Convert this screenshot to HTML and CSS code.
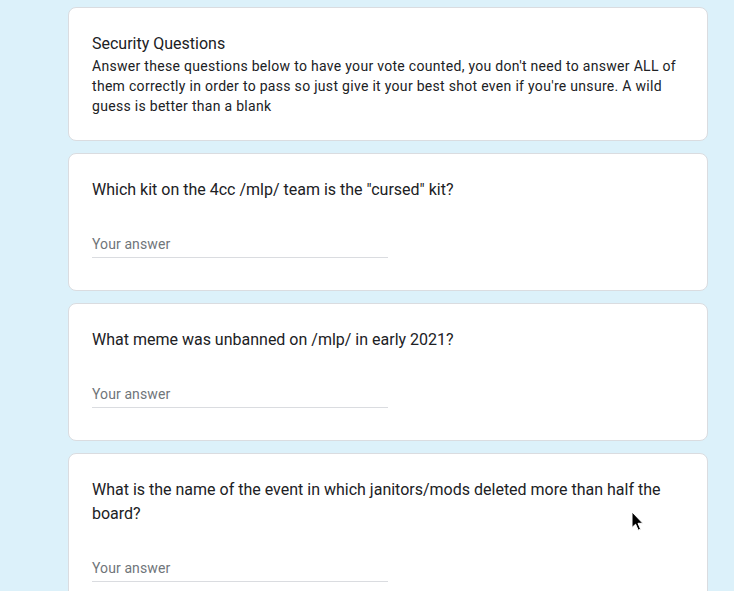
FILE: index.html
```html
<!DOCTYPE html>
<html>
<head>
<meta charset="utf-8">
<link rel="stylesheet" href="styles.css">
</head>
<body>
<div class="form">
  <div class="card">
    <div class="section-title">Security Questions</div>
    <div class="section-desc">Answer these questions below to have your vote counted, you don't need to answer ALL of them correctly in order to pass so just give it your best shot even if you're unsure. A wild guess is better than a blank</div>
  </div>
  <div class="card">
    <div class="q-title">Which kit on the 4cc /mlp/ team is the "cursed" kit?</div>
    <div class="answer"><span class="placeholder">Your answer</span></div>
  </div>
  <div class="card">
    <div class="q-title">What meme was unbanned on /mlp/ in early 2021?</div>
    <div class="answer"><span class="placeholder">Your answer</span></div>
  </div>
  <div class="card">
    <div class="q-title">What is the name of the event in which janitors/mods deleted more than half the board?</div>
    <div class="answer"><span class="placeholder">Your answer</span></div>
  </div>
</div>
<svg class="cursor" width="14" height="22" viewBox="0 0 14 22">
  <path d="M1 1 L1 16.5 L4.6 13.2 L7.2 19.2 L9.6 18.2 L7 12.3 L11.8 12.3 Z" fill="#000" stroke="#fff" stroke-width="1" stroke-linejoin="round"/>
</svg>
</body>
</html>
```
FILE: styles.css
```css
html, body {
  margin: 0;
  padding: 0;
  background: #dcf1fa;
  font-family: Roboto, "Liberation Sans", Arial, sans-serif;
  color: #202124;
  overflow: hidden;
  height: 591px;
}
.form {
  display: flex;
  flex-direction: column;
  gap: 12px;
  width: 640px;
  margin-left: 68px;
  padding-top: 7px;
}
.card {
  background: #fff;
  border: 1px solid #dadce0;
  border-radius: 8px;
  padding: 24px 24px 24px 23px;
}
.section-title {
  font-size: 16px;
  line-height: 24px;
  letter-spacing: 0;
}
.section-desc {
  font-size: 14px;
  line-height: 20px;
  letter-spacing: 0.3px;
}
.q-title {
  font-size: 16px;
  line-height: 24px;
  letter-spacing: 0;
}
.answer {
  width: 296px;
  margin-top: 16px;
  padding-top: 16px;
  padding-bottom: 3px;
  border-bottom: 1px solid #dadce0;
  margin-bottom: 8px;
}
.placeholder {
  display: block;
  font-size: 14px;
  line-height: 20px;
  color: #70757a;
  letter-spacing: 0.1px;
}
.cursor {
  position: absolute;
  left: 631px;
  top: 511px;
}
```
